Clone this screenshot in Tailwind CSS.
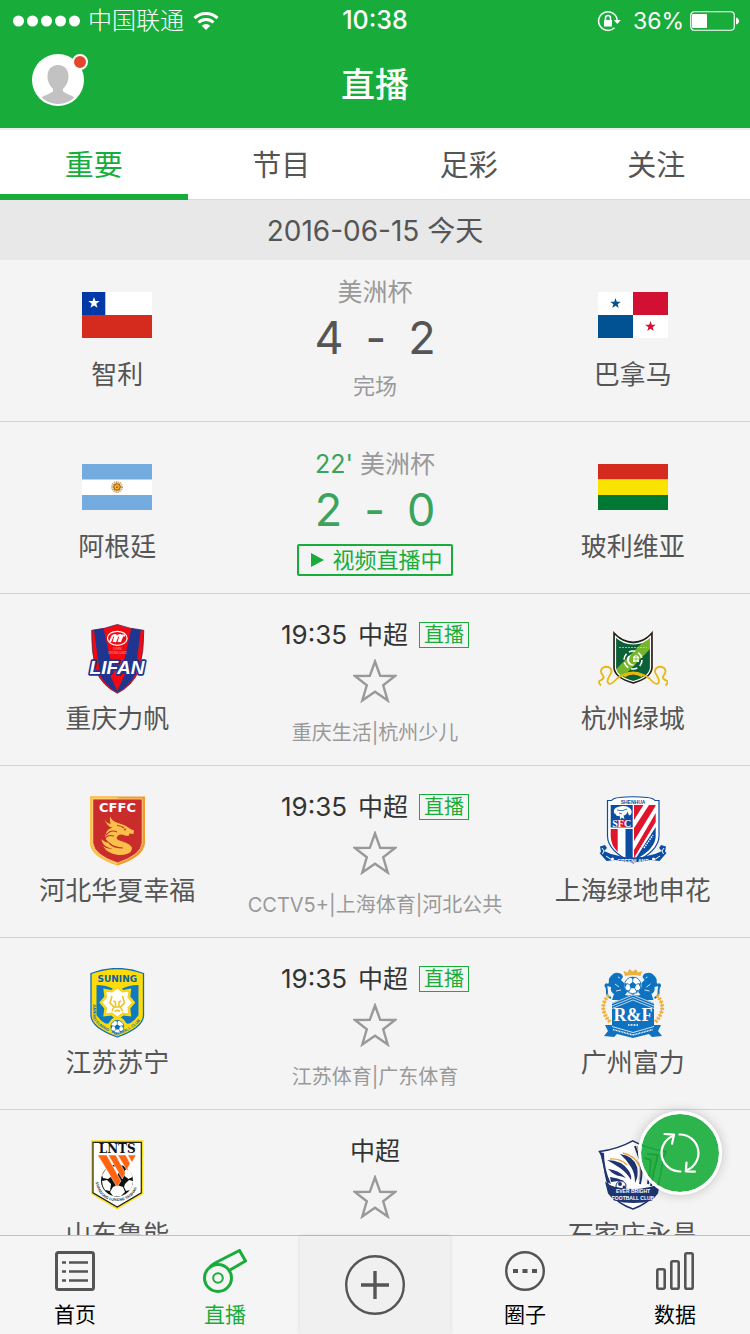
<!DOCTYPE html>
<html lang="zh-CN">
<head>
    <meta charset="UTF-8">
    <meta name="viewport" content="width=device-width, initial-scale=1.0">
    <title>直播</title>
    <script src="https://cdn.jsdelivr.net/npm/@tailwindcss/browser@4"></script>
</head>
<body class="relative flex flex-col h-screen overflow-hidden bg-[#f4f4f4] text-[#555] font-['Inter','Noto_Sans_CJK_SC',sans-serif]">

    <!-- Shared shapes -->
    <svg class="hidden" aria-hidden="true">
        <symbol id="star" viewBox="0 0 44 44">
            <path d="M22 2.5l5.200 14.300 15 .2-12 9.300 4.500 15.200L22 32.800l-12.700 8.700 4.500-15.200L1.800 17l15-.2z" fill="none" stroke="#999" stroke-width="2.400"/>
        </symbol>
        <symbol id="flag-star" viewBox="-10 -10 20 20">
            <path d="M0-10l2.350 6.800h7.200L3.800 1.200 5.900 8.100 0 4-5.900 8.100-3.800 1.200-9.550-3.200h7.200z" fill="currentColor"/>
        </symbol>
        <symbol id="ball" viewBox="-10 -10 20 20">
            <circle r="9.500" fill="#fff" stroke="currentColor"/>
            <path d="M0-4l4 3-1.500 4.500h-5L-4-1zM-3-9.500h6L0-7zM9-3v6L6.500-1.500zM-9-3v6l2.500-4.500zM3.500 8.500L4 6l4-1zM-3.500 8.500L-4 6l-4-1z" fill="currentColor"/>
            <path d="M0-4v-4M4-1l3-1M2.500 3.500L4 6.500M-2.500 3.500L-4 6.500M-4-1l-3-1" stroke="currentColor" fill="none"/>
        </symbol>
    </svg>

    <header class="shrink-0 bg-[#18ad3a] text-white">
        <!-- Status bar -->
        <div class="grid grid-cols-3 items-center h-10 px-3 pt-0.5 text-2xl">
            <div class="flex items-center">
                <svg class="w-[70px] h-3" viewBox="0 0 70 12" fill="#fff">
                    <circle cx="6.500" cy="6" r="5.500"/><circle cx="20.500" cy="6" r="5.500"/><circle cx="34.500" cy="6" r="5.500"/><circle cx="48.500" cy="6" r="5.500"/><circle cx="62.500" cy="6" r="5.500"/>
                </svg>
                <span class="ml-[6px] font-light">中国联通</span>
                <svg class="ml-[9px] w-[26px] h-5" viewBox="0 0 26 20" fill="none" stroke="#fff" stroke-width="3">
                    <path d="M1.500 7.200a16.500 16.500 0 0 1 23 0M5.500 11.500a10.800 10.800 0 0 1 15 0"/>
                    <path d="M13 19l-4.300-4.200a6.200 6.200 0 0 1 8.600 0z" fill="#fff" stroke="none"/>
                </svg>
            </div>
            <div class="text-center text-[25px] font-medium">10:38</div>
            <div class="-mr-px flex items-center justify-end">
                <svg class="mr-3 w-6 h-6" viewBox="0 0 24 24" fill="none" stroke="#fff" stroke-width="1.500">
                    <path d="M20.200 11.500A9.300 9.300 0 1 0 17.500 18.700"/>
                    <path d="M16.800 11h7l-3.500 4z" fill="#fff" stroke="none"/>
                    <rect x="7" y="11" width="8" height="6.500" fill="#fff" stroke="none"/>
                    <path d="M8.500 11.500V9a2.500 2.500 0 0 1 5 0v2.500"/>
                </svg>
                <span class="text-[23px]">36%</span>
                <svg class="ml-[6px] w-[49px] h-5" viewBox="0 0 49 20">
                    <rect x=".75" y=".75" width="43.500" height="18.500" rx="3.500" fill="none" stroke="#fff" stroke-width="1.200"/>
                    <rect x="2" y="3" width="15" height="14" rx="1" fill="#fff"/>
                    <path d="M46 6.500q3 1 3 3.500t-3 3.500z" fill="#fff"/>
                </svg>
            </div>
        </div>
        <div class="grid grid-cols-[1fr_auto_1fr] items-start h-[88px] px-8 pt-3.5">
            <button type="button" aria-label="个人中心" class="relative w-[52px] h-[52px]">
                <svg class="w-full h-full" viewBox="0 0 52 52">
                    <circle cx="26" cy="26" r="26" fill="#fff"/>
                    <path d="M26 11c7 0 10.500 5 10.500 11.500 0 6-2.800 9.500-5.500 12.500v2.500c3 2.500 8 3.200 11.500 6A23.500 23.500 0 0 1 26 50a23.500 23.500 0 0 1-16.500-6.500c3.500-2.800 8.500-3.500 11.500-6V35c-2.700-3-5.500-6.500-5.500-12.500C15.500 16 19 11 26 11z" fill="#c2c2c2"/>
                </svg>
                <span class="absolute top-0 -right-1 w-4 h-4 rounded-full border-2 border-white bg-[#e5452c]"></span>
            </button>
            <h1 class="text-[34px] leading-[62px] font-medium">直播</h1>
        </div>
    </header>

    <nav class="shrink-0 grid grid-cols-4 h-[72px] border-t-2 border-t-[#ececec] bg-white text-[29px] text-center leading-[72px] shadow-[inset_0_-1px_0_#d9d9d9]">
        <a href="#" class="h-[70px] border-b-6 border-[#18ad3a] text-[#18ad3a]">重要</a>
        <a href="#" class="h-[70px]">节目</a>
        <a href="#" class="h-[70px]">足彩</a>
        <a href="#" class="h-[70px]">关注</a>
    </nav>

    <main class="flex-1 min-h-0 overflow-hidden">
        <h2 class="h-[60px] bg-[#e8e8e8] text-center text-[28px] leading-[62px]">2016-06-15 今天</h2>

        <ul class="text-center">
            <li class="grid grid-cols-[5fr_6fr_5fr] h-[162px] pt-5 border-b border-[#d2d2d2]">
                <div>
                    <svg class="mx-auto w-[70px] h-[70px]" viewBox="0 0 70 70">
                        <path d="M0 12h70v46H0z" fill="#d52b1e"/>
                        <path d="M23 12h47v23H23z" fill="#fff"/>
                        <path d="M0 12h23.300v23H0z" fill="#0039a6"/>
                        <use href="#flag-star" x="6" y="17" width="12" height="12" color="#fff"/>
                    </svg>
                    <p class="mt-1 text-[26px] leading-[42px]">智利</p>
                </div>
                <div>
                    <p class="text-[25px] leading-6 text-[#999]">美洲杯</p>
                    <p class="mt-1 flex justify-center gap-[22px] text-[45px] leading-[60px]"><span>4</span><span>-</span><span>2</span></p>
                    <p class="mt-0.5 text-[22px] leading-8 text-[#999]">完场</p>
                </div>
                <div>
                    <svg class="mx-auto w-[70px] h-[70px]" viewBox="0 0 70 70">
                        <path d="M0 12h70v46H0z" fill="#fff"/>
                        <path d="M35 12h35v23H35z" fill="#d21034"/>
                        <path d="M0 35h35v23H0z" fill="#005293"/>
                        <use href="#flag-star" x="12" y="18" width="11" height="11" color="#005293"/>
                        <use href="#flag-star" x="47" y="41" width="11" height="11" color="#d21034"/>
                    </svg>
                    <p class="mt-1 text-[26px] leading-[42px]">巴拿马</p>
                </div>
            </li>

            <li class="grid grid-cols-[5fr_6fr_5fr] h-[172px] pt-[30px] border-b border-[#d2d2d2]">
                <div>
                    <svg class="mx-auto w-[70px] h-[70px]" viewBox="0 0 70 70">
                        <path d="M0 12h70v46H0z" fill="#74acdf"/>
                        <path d="M0 27.500h70v15.500H0z" fill="#fff"/>
                        <circle cx="35" cy="35" r="4.800" fill="none" stroke="#c9a06a" stroke-width="2.200" stroke-dasharray="1.200 .7"/>
                        <circle cx="35" cy="35" r="3.300" fill="#f6b40e" stroke="#85501c"/>
                        <path d="M34 34.500h2v1.500h-2z" fill="#c05a10"/>
                    </svg>
                    <p class="mt-1 text-[26px] leading-[42px]">阿根廷</p>
                </div>
                <div class="text-[#3aa35c]">
                    <p class="text-[25px] leading-6">22' <span class="text-[#999]">美洲杯</span></p>
                    <p class="mt-1 flex justify-center gap-[22px] text-[45px] leading-[60px]"><span>2</span><span>-</span><span>0</span></p>
                    <a href="#" class="mt-1 inline-flex items-center gap-2 h-8 pl-3 pr-2 border-2 border-[#18ad3a] rounded-xs text-[22px] leading-7 text-[#18ad3a]">
                        <svg class="w-[13px] h-[14px]" viewBox="0 0 13 14"><path d="M0 0l13 7-13 7z" fill="currentColor"/></svg>
                        视频直播中
                    </a>
                </div>
                <div>
                    <svg class="mx-auto w-[70px] h-[70px]" viewBox="0 0 70 70">
                        <path d="M0 12h70v15.500H0z" fill="#d52b1e"/>
                        <path d="M0 27.500h70v15.500H0z" fill="#f9e300"/>
                        <path d="M0 43h70v15H0z" fill="#007934"/>
                    </svg>
                    <p class="mt-1 text-[26px] leading-[42px]">玻利维亚</p>
                </div>
            </li>

            <li class="grid grid-cols-[5fr_6fr_5fr] h-[172px] pt-7 border-b border-[#d2d2d2]">
                <div class="pt-0.5">
                    <!-- Chongqing Lifan -->
                    <svg class="mx-auto w-[70px] h-[70px]" viewBox="0 0 70 70">
                        <path d="M35.300.5Q48 5 61.800 6.300q.5 20-5 40.700Q50 62 35.300 69.300 20.500 62 14 47 9 26 9.700 6.300 23 5 35.300.5z" fill="#f10a12" stroke="#5b2247" stroke-width=".8"/>
                        <path d="M12 6l9.500-1.700L36 68.800q-12-6-18-18zM58.800 6l-9.500-1.700L35 68.800q12-6 18-18z" fill="#1f3590"/>
                        <path d="M27.500 50h15.500l-7.700 17z" fill="#f10a12"/>
                        <ellipse cx="35.300" cy="14.300" rx="9.800" ry="7" fill="none" stroke="#fff" stroke-width="1.200"/>
                        <path d="M28 18l2.500-6q4-2 3 0l-2 6M33 18l2.500-6q4-2 3 0l-2 6M38 18l2.500-6.500h2.500" fill="none" stroke="#fff" stroke-width="2"/>
                        <text x="35.300" y="26" text-anchor="middle" font-size="3" fill="#f7a0a0">LIFAN</text>
                        <text x="35.300" y="30" text-anchor="middle" font-size="3" fill="#f7a0a0">CHONGQING</text>
                        <text x="35" y="50" text-anchor="middle" font-family="Liberation Sans" font-size="19" font-weight="bold" font-style="italic" fill="#fff" stroke="#1f3590" stroke-width="3.500" stroke-linejoin="round" paint-order="stroke">LIFAN</text>
                    </svg>
                    <p class="mt-1 text-[26px] leading-[42px]">重庆力帆</p>
                </div>
                <div>
                    <p class="flex items-center justify-center gap-[11px] text-[25px] leading-[26px] text-[#333]"><span class="text-[26px]">19:35</span><span>中超</span><span class="h-[26px] px-1 border border-[#18ad3a] text-xl leading-6 text-[#18ad3a]">直播</span></p>
                    <button type="button" aria-label="关注比赛" class="mt-[11px] block mx-auto w-11 h-11"><svg class="w-11 h-11"><use href="#star"/></svg></button>
                    <p class="mt-3 text-xl leading-9 text-[#999]">重庆生活|杭州少儿</p>
                </div>
                <div class="pt-0.5">
                    <!-- Hangzhou Greentown -->
                    <svg class="mx-auto w-[70px] h-[70px]" viewBox="0 0 70 70">
                        <path d="M16 9q8 9 19.300 9.300Q46.500 18 54 9v35q-1 10-18.700 15Q17 54 16 44z" fill="#0a6138" stroke="#2b1a16" stroke-width="1.600"/>
                        <path d="M46 17l6.500-3.500v11L25 53q-6-3-7.200-7.500z" fill="#76b52a"/>
                        <path d="M17.500 12.500q7 7 17.800 7.500Q46 19.500 52.500 12.500V44q-1 9-17.200 13.500Q18.500 53 17.500 44z" fill="none" stroke="#fff" stroke-width="1.200"/>
                        <path d="M21 23.500h28" stroke="#b9d8b5" stroke-width=".8" stroke-dasharray="2 1"/>
                        <circle cx="35" cy="36" r="9" fill="none" stroke="#fff" stroke-width="1.600" stroke-dasharray="6.500 3"/>
                        <path d="M33 31q-5 1-4 6 2 6 8 4-6-1-6-5 0-3 2-5z" fill="#fff"/>
                        <path d="M35 33l3-2.500 3 2.500v5h-6z" fill="#fff"/><path d="M38 31v7M35 35h6" stroke="#76b52a" stroke-width=".8"/>
                        <path d="M3 61.500Q-.5 58 2 56.500q4-1 3.500-4-4.500-5-1-8.500 4-2.500 7.500 0 3 3 0 7-4 6-1.500 8.500 3 1.500 8.500-5Q26 49 35.300 49T51.500 54.500q5.500 6.500 8.500 5 2.500-2.500-1.500-8.500-3-4 0-7 3.500-2.500 7.500 0 3.500 3.500-1 8.500-.5 3 3.500 4 2.500 1.500-1 5" fill="none" stroke="#e9b80f" stroke-width="1.800"/>
                        <path d="M26 52q9-6 18.500 0" fill="none" stroke="#e9b80f" stroke-width="3"/>
                    </svg>
                    <p class="mt-1 text-[26px] leading-[42px]">杭州绿城</p>
                </div>
            </li>

            <li class="grid grid-cols-[5fr_6fr_5fr] h-[172px] pt-7 border-b border-[#d2d2d2]">
                <div class="pt-0.5">
                    <!-- Hebei China Fortune -->
                    <svg class="mx-auto w-[70px] h-[70px]" viewBox="0 0 70 70">
                        <path d="M8 .5h55V47q-1 14-27.500 22.500Q9 61 8 47z" fill="#f39a2d"/>
                        <path d="M8 .5h27.500v69Q9 61 8 47z" fill="#fcc34a"/>
                        <path d="M10.800 3h49.400v44q-1 12-24.700 20Q12 59 10.800 47z" fill="#ca2b2b" stroke="#fce0a0" stroke-width=".8"/>
                        <text x="35.500" y="15.500" text-anchor="middle" font-family="DejaVu Sans" font-size="13" font-weight="bold" fill="#fff">CFFC</text>
                        <path d="M22 22.500q2 4.500 6.500 5.500-1-4-.5-7.500 2.500 5 8 6.500 5 1.500 8 3l4.500 3 3.500 1.500-.5 3.500-4-.500-1 2.500-3.500-.5q-4-2-7 0-4 3.500 3 5.500Q50 48 50 53q-1 6-13.500 6-11-1-15.500-9 4 3.500 9.500 3-11-2.500-11-10 3 3.500 8 4-7-5-2.500-12 1.500-2.500 5.500-3.500-5 0-8.500-9z" fill="#fbc04c"/>
                        <path d="M35 29.500q4 0 7 2.500M24 39q5-6 11-3M22 44q3-6 10-4M27 47q5 5 14 5" fill="none" stroke="#ca2b2b" stroke-width="1.200"/>
                        <circle cx="43" cy="33.500" r="1" fill="#ca2b2b"/>
                    </svg>
                    <p class="mt-1 text-[26px] leading-[42px]">河北华夏幸福</p>
                </div>
                <div>
                    <p class="flex items-center justify-center gap-[11px] text-[25px] leading-[26px] text-[#333]"><span class="text-[26px]">19:35</span><span>中超</span><span class="h-[26px] px-1 border border-[#18ad3a] text-xl leading-6 text-[#18ad3a]">直播</span></p>
                    <button type="button" aria-label="关注比赛" class="mt-[11px] block mx-auto w-11 h-11"><svg class="w-11 h-11"><use href="#star"/></svg></button>
                    <p class="mt-3 text-xl leading-9 text-[#999]">CCTV5+|上海体育|河北公共</p>
                </div>
                <div class="pt-0.5">
                    <!-- Shanghai Shenhua -->
                    <svg class="mx-auto w-[70px] h-[70px]" viewBox="0 0 70 70">
                        <path d="M9.500 4.500h4q2-2.500 8-3 13-1.500 27.500 0 6 .5 8 3h4V40q0 15-25.700 27Q9.500 55 9.500 40z" fill="#fff" stroke="#0b4da2" stroke-width="1.200"/>
                        <text x="35" y="7.500" text-anchor="middle" font-family="Liberation Sans" font-size="5" font-weight="bold" fill="#0b4da2">SHENHUA</text>
                        <path d="M12.700 9h22v22.500h-22z" fill="#0b4da2"/>
                        <path d="M16 17q-1-5 4-6 6-2 11 .5 4 3 2 7l-2 1-1.500-4q-1 4-4 4l1 3.500-3-1.500-1 2.500-1-4.500q-3 1.500-3.500-1z" fill="#fff"/>
                        <path d="M19 14q5 2 10-1M21 17l3 1" stroke="#0b4da2" stroke-width=".8" fill="none"/>
                        <path d="M20 23.500h7.500V31H20z" fill="#e0142a"/>
                        <text x="23.700" y="30.500" text-anchor="middle" font-family="Liberation Serif" font-size="10" font-weight="bold" fill="#fff">SFC</text>
                        <path d="M12.700 33h7v23q-7-7-7-16z" fill="#e0142a"/>
                        <path d="M27.500 33h7.200v32l-7.200-4z" fill="#0b4da2"/>
                        <path d="M36 9h9.500L36 24zM51 9h6.500v1L36 45V32zM57.700 17v9L36 62v-8z" fill="#e0142a"/>
                        <path d="M57.700 31v9q0 13-21 24z" fill="#0b4da2"/>
                        <path d="M46 52l9-13" stroke="#fff" stroke-width="1.500" stroke-dasharray="1.500 1"/>
                        <path d="M2 50.500l5-1.500 2 3-3 3 7 3q22 7 44 0l7-3-3-3 2-3 5 1.500-1 5 1.500 1.500-7 8-9-1q-17 5-35 0l-9 1-7-8L3 56z" fill="#0b4da2"/>
                        <path d="M4 52l2 3-1.500 3M66 52l-2 3 1.500 3M8 60l6 4M62 60l-6 4" stroke="#fff" stroke-width="1" fill="none"/>
                        <text x="35" y="66.500" text-anchor="middle" font-family="Liberation Sans" font-size="5" font-weight="bold" fill="#fff">GREENLAND</text>
                        <circle cx="14.500" cy="63" r="1.500" fill="#fff"/><circle cx="55.500" cy="63" r="1.500" fill="#fff"/>
                    </svg>
                    <p class="mt-1 text-[26px] leading-[42px]">上海绿地申花</p>
                </div>
            </li>

            <li class="grid grid-cols-[5fr_6fr_5fr] h-[172px] pt-7 border-b border-[#d2d2d2]">
                <div class="pt-0.5">
                    <!-- Jiangsu Suning -->
                    <svg class="mx-auto w-[70px] h-[70px]" viewBox="0 0 70 70">
                        <path d="M9 5.500Q22 .5 35.300.5T61.500 5.500V48q-1 12-26.200 21Q10 60 9 48z" fill="#fddc0a" stroke="#0c6cb5" stroke-width="1.300"/>
                        <text x="35.300" y="14" text-anchor="middle" font-family="DejaVu Sans" font-size="9" font-weight="bold" fill="#0c5fa8">SUNING</text>
                        <path d="M14.500 17q10 0 17 4l4 2 4-2q7-4 17-4v30q-3 5-8 8-4 2-5-1-3-5-8-5t-8 5q-1 3-5 1-5-3-8-8z" fill="#0f7ac0"/>
                        <path d="M35.300 17.500l6 4.500 8-1.500-1 8 5 6-5 6 1 8-8-1-6 5-6-5-8 1 1-8-5-6 5-6-1-8 8 1.500z" fill="#fddc0a"/>
                        <path d="M35.300 20l5.200 4 6.500-1-1 6.500 4.500 5-4.500 5 1 6.500-6.500-1-5.200 4-5.200-4-6.500 1 1-6.500-4.500-5 4.500-5-1-6.500 6.500 1z" fill="#fff" stroke="#f1cb22"/>
                        <path d="M30 28l-2 7 4 4-2 4M40.500 28l2 7-4 4 2 4M31.500 33l2 1v5h3.500v-5l2-1M32.500 43.500l2.800-1.500 2.800 1.500" fill="none" stroke="#efc21a" stroke-width="1.500"/>
                        <use href="#ball" x="28.300" y="52" width="14" height="14" color="#0c6cb5"/>
                        <path id="sn-arc" d="M10.500 36v11q1 11 24.800 20.500Q59 58 60 47V36" fill="none"/>
                        <text font-family="Liberation Sans" font-size="4" font-weight="bold" fill="#0c6cb5"><textPath href="#sn-arc">JIANGSU SUNING · FOOTBALL CLUB</textPath></text>
                    </svg>
                    <p class="mt-1 text-[26px] leading-[42px]">江苏苏宁</p>
                </div>
                <div>
                    <p class="flex items-center justify-center gap-[11px] text-[25px] leading-[26px] text-[#333]"><span class="text-[26px]">19:35</span><span>中超</span><span class="h-[26px] px-1 border border-[#18ad3a] text-xl leading-6 text-[#18ad3a]">直播</span></p>
                    <button type="button" aria-label="关注比赛" class="mt-[11px] block mx-auto w-11 h-11"><svg class="w-11 h-11"><use href="#star"/></svg></button>
                    <p class="mt-3 text-xl leading-9 text-[#999]">江苏体育|广东体育</p>
                </div>
                <div class="pt-0.5">
                    <!-- Guangzhou R&F -->
                    <svg class="mx-auto w-[70px] h-[70px]" viewBox="0 0 70 70">
                        <path d="M27 8l-1.500-5 4 1.500L31.500 1l3.300 2.500L38 1l2 3.500 4-1.500-1.500 5q-8-2-15.500 0z" fill="#f0b03c"/>
                        <g id="rf-lion" fill="#0e72c0">
                            <path d="M13 8q3-4 7-3 4 0 5 4l-2 3 3 3v4l4 4-3 4 6 1-2 4H14l2-6q-4-2-3-7l-4-1 2-4q-1-3 2-6z"/>
                            <path d="M13 30q-5-2-4-7 0-4-2-6" fill="none" stroke="#0e72c0" stroke-width="2"/>
                            <circle cx="8.500" cy="17" r="1.800"/>
                            <path d="M20 9l2 1M17 16l4 3M18 23l5-1" stroke="#fff" stroke-width=".8" fill="none"/>
                        </g>
                        <use href="#rf-lion" transform="matrix(-1 0 0 1 69.500 0)"/>
                        <use href="#ball" x="26" y="8.500" width="17.500" height="17.500" color="#0e72c0"/>
                        <path d="M14 35l21-9 21 9v25l-21 6-21-6z" fill="#0e72c0"/>
                        <path d="M14 35.500l21-8.500 21 8.500M14 38l21-8.500L56 38M14 40.500L35 32l21 8.500" fill="none" stroke="#fff" stroke-width=".7"/>
                        <path d="M7 57h6l22 6 22-6h6l-3 6 4 5-10 1 -3-3-16 4-16-4-3 3-10-1 4-5z" fill="#0e72c0"/>
                        <text x="35" y="53" text-anchor="middle" font-family="Liberation Serif" font-size="18" font-weight="bold" fill="#fff">R&amp;F</text>
                        <path d="M14 58.500l21 6 21-6" fill="none" stroke="#fff" stroke-width=".8"/>
                        <path d="M30 57h10" stroke="#fff" stroke-width="1.500" stroke-dasharray="1 .5"/>
                        <path d="M15 61.500l20 5.500 20-5.500" fill="none" stroke="#fff" stroke-width="1.500" stroke-dasharray="1 .6"/>
                        <path d="M10.500 27Q-.5 40 12 54M59 27q11 13-1.500 27" fill="none" stroke="#f0b03c" stroke-width="4" stroke-dasharray="2 1.500"/>
                        <path d="M10.500 27Q-.5 40 12 54M59 27q11 13-1.500 27" fill="none" stroke="#f0b03c"/>
                    </svg>
                    <p class="mt-1 text-[26px] leading-[42px]">广州富力</p>
                </div>
            </li>

            <li class="grid grid-cols-[5fr_6fr_5fr] h-[172px] pt-7 border-b border-[#d2d2d2]">
                <div class="pt-0.5">
                    <!-- Shandong Luneng -->
                    <svg class="mx-auto w-[70px] h-[70px]" viewBox="0 0 70 70">
                        <path d="M9 .3h52.300V54L35.200 69.500 9 54z" fill="#fbe01e"/>
                        <path d="M11 2.300h48.300v50.500L35.200 67 11 52.800z" fill="#fff" stroke="#222" stroke-width="1.200"/>
                        <text x="35.200" y="13" text-anchor="middle" font-family="DejaVu Serif" font-size="12" font-weight="bold" fill="#111">LNTS</text>
                        <circle cx="35" cy="40.500" r="16" fill="#111"/>
                        <path d="M20 35l4-6 5 1 1 6-4 3-5-1zM20 41l5-1 4 4-1 7-5-1q-3-4-3-9zM31 47l4-2 6 2 2 5-4 4h-8l-3-4zM43 44l4-4 4 1q0 5-3 9l-4 1-2-4zM43 30l4-1q3 4 3.500 8l-4 2-4-3z" fill="#fff"/>
                        <path d="M28 26.500h8l2 4-3 5-5-2z" fill="#fff"/>
                        <path d="M15.700 15h9L39 41l-4 6zM26.300 15h7.500l9.500 18-3 6zM35.700 15h8l4.500 8.500-3.500 6.500zM45.700 15H54l-4 7.500z" fill="#ff6410" stroke="#fff" stroke-width=".5"/>
                        <path id="ln-arc" d="M13.500 42q4 19 21.500 19t21.500-19" fill="none"/>
                        <text font-family="Liberation Sans" font-size="3.800" font-weight="bold" fill="#333"><textPath href="#ln-arc">SHANDONG LUNENG TAISHAN</textPath></text>
                    </svg>
                    <p class="mt-1 text-[26px] leading-[42px]">山东鲁能</p>
                </div>
                <div>
                    <p class="text-[25px] leading-[26px] text-[#333]">中超</p>
                    <button type="button" aria-label="关注比赛" class="mt-[11px] block mx-auto w-11 h-11"><svg class="w-11 h-11"><use href="#star"/></svg></button>
                </div>
                <div class="pt-0.5">
                    <!-- Shijiazhuang Ever Bright -->
                    <svg class="mx-auto w-[70px] h-[70px]" viewBox="0 0 70 70">
                        <path d="M1.500 11.500Q20 9 34.700.8 50 9 68 11.500q-3 5-4 14-2 15-7 28-7 10-22 15.500-15-5-22-15.500-5-13-7-28-1-9-4.500-14z" fill="#fff" stroke="#1f3470" stroke-width="1.500"/>
                        <path d="M2 12l4 1q0 16 7 31l-4-2Q5 25 2 12z" fill="#1f3470"/>
                        <path d="M22 14q14 2 17 13 2 9-2 16 0-10-4-16-4-7-11-13zM9 20q15 0 22 11 3 5 2 9-4-7-11-12-6-4-13-8zM10 29q11 1 18 9-4-2-9-2.500-5-2-9-6.500zM12 37q8 1 14 4-8 0-13 1z" fill="#1f3470"/>
                        <path d="M25 13q13 3 17 14 1 7-1 13M12 19q10-1 17 6" fill="none" stroke="#e9a43c" stroke-width="1.300"/>
                        <path d="M37 6l5 14q3 12 0 24M49 14l11 1q-4 14-7 31M46 18l7 2q-1 11-3 24" fill="none" stroke="#1f3470" stroke-width="2"/>
                        <path d="M39 6l5 13M52 17l5 1q-3 12-5 25" fill="none" stroke="#e9a43c" stroke-width="1.200"/>
                        <circle cx="23" cy="46" r="5" fill="#fff" stroke="#1f3470"/><circle cx="22" cy="44" r="2" fill="#1f3470"/><circle cx="26" cy="47" r="1.500" fill="#1f3470"/>
                        <path d="M7 41.500q5 5 14 6 14 3 28 0 9-1 13-6l-2 12-6 7q-18 5-38 0l-6-7z" fill="#1f3470"/>
                        <text x="35" y="53" text-anchor="middle" font-family="Liberation Sans" font-size="5" font-weight="bold" fill="#fff">EVER BRIGHT</text>
                        <text x="35" y="59.500" text-anchor="middle" font-family="Liberation Sans" font-size="5" font-weight="bold" fill="#fff">FOOTBALL CLUB</text>
                    </svg>
                    <p class="mt-1 text-[26px] leading-[42px]">石家庄永昌</p>
                </div>
            </li>
        </ul>
    </main>

    <!-- Refresh -->
    <button type="button" aria-label="刷新" class="absolute right-7 bottom-[139px] flex items-center justify-center w-[84px] h-[84px] rounded-full border-3 border-white bg-[#18ad3a]/90 bg-clip-padding shadow-[0_0_12px_rgba(0,0,0,0.2)]">
        <svg class="w-11 h-11" viewBox="0 0 44 44" fill="none" stroke="#fff" stroke-width="2.200" stroke-linecap="round" stroke-linejoin="round">
            <path d="M21.500 3.500a18.500 18.500 0 0 1 7 35.800M22.500 40.500a18.500 18.500 0 0 1-7-35.800"/>
            <path d="M6.500 3l9.500.7-2 9M28.500 31.500l-.7 8.800 9.200.3"/>
        </svg>
    </button>

    <nav class="shrink-0 grid grid-cols-5 h-[99px] border-t border-[#c0c0c0] bg-[#f5f5f5] text-center text-[21px] leading-8 text-black">
        <a href="#" class="flex flex-col items-center pt-[13px]">
            <svg class="w-11 h-11" viewBox="0 0 44 44" fill="none" stroke="#555" stroke-width="3">
                <rect x="3.500" y="3.500" width="37" height="37" rx="2"/>
                <path d="M9 13.500h4M9 22.500h4M9 31.500h4M16 13.500h19M16 22.500h19M16 31.500h19" stroke-width="2.600"/>
            </svg>
            <span class="mt-1.5">首页</span>
        </a>
        <a href="#" class="flex flex-col items-center pt-[13px] text-[#18ad3a]">
            <svg class="w-11 h-11" viewBox="0 0 44 44" fill="none" stroke="currentColor" stroke-width="3">
                <circle cx="15" cy="29" r="13.500"/>
                <circle cx="15" cy="29" r="4.800" stroke-width="2"/>
                <path d="M7 18Q9 15.500 12 14L36.500 1.500l6 10.500L27 21"/>
            </svg>
            <span class="mt-1.5">直播</span>
        </a>
        <button type="button" aria-label="添加" class="flex items-center justify-center bg-[#f0f0f0] shadow-[0_0_4px_rgba(0,0,0,0.12)]">
            <svg class="w-[60px] h-[60px]" viewBox="0 0 60 60" fill="none" stroke="#555">
                <circle cx="30" cy="30" r="28.800" stroke-width="2.400"/>
                <path d="M30 16v28M16 30h28" stroke-width="3.400"/>
            </svg>
        </button>
        <a href="#" class="flex flex-col items-center pt-[13px]">
            <svg class="w-11 h-11" viewBox="0 0 44 44" fill="none" stroke="#555">
                <circle cx="22" cy="22" r="18.800" stroke-width="2.400"/>
                <path d="M10 22h5M19.500 22h5M29 22h5" stroke-width="4"/>
            </svg>
            <span class="mt-1.5">圈子</span>
        </a>
        <a href="#" class="flex flex-col items-center pt-[13px]">
            <svg class="w-11 h-11" viewBox="0 0 44 44" fill="none" stroke="#555" stroke-width="2.600">
                <rect x="4.300" y="20.300" width="7.400" height="19.400" rx="1.500"/>
                <rect x="18.300" y="12.300" width="7.400" height="27.400" rx="1.500"/>
                <rect x="32.300" y="4.300" width="7.400" height="35.400" rx="1.500"/>
            </svg>
            <span class="mt-1.5">数据</span>
        </a>
    </nav>
</body>
</html>
